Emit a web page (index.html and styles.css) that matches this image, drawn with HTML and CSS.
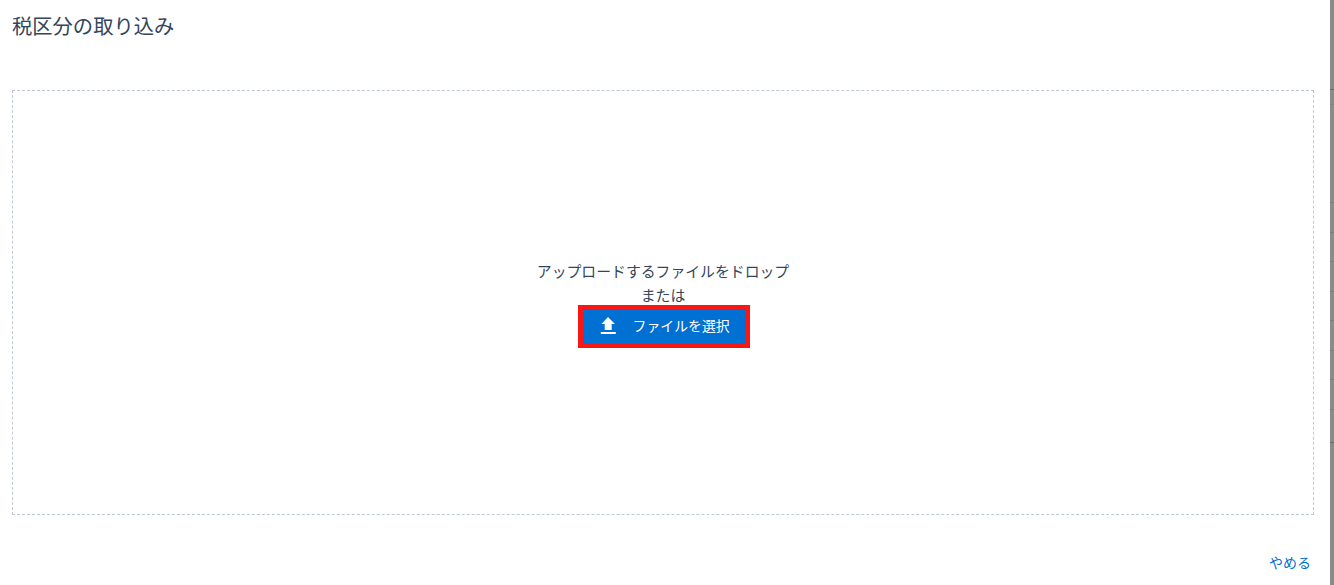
FILE: index.html
```html
<!DOCTYPE html>
<html lang="ja">
<head>
    <meta charset="UTF-8">
    <title>税区分の取り込み</title>
    <link rel="stylesheet" href="styles.css">
</head>
<body>

<div class="page">
    <div class="modal">
        <h1 class="title">税区分の取り込み</h1>

        <div class="dropzone">
            <p class="drop-text">アップロードするファイルをドロップ</p>
            <p class="drop-or">または</p>
            <button class="upload-button" type="button">
                <svg class="upload-icon" width="16" height="17" viewBox="0 0 16 17">
                    <path d="M8 0 L15 7 H11.7 V13 H4.7 V7 H1.5 Z" fill="#ffffff"></path>
                    <rect x="0.8" y="15" width="15" height="2" fill="#ffffff"></rect>
                </svg>
                <span class="upload-label">ファイルを選択</span>
            </button>
        </div>

        <div class="footer">
            <a class="cancel-link" href="#">やめる</a>
        </div>
    </div>

    <!-- page behind the modal, dimmed -->
    <div class="backdrop">
        <div class="backdrop-row row-head"></div>
        <div class="backdrop-row row-sub"></div>
        <div class="backdrop-row row-tall"></div>
        <div class="backdrop-row"></div>
        <div class="backdrop-row"></div>
        <div class="backdrop-row"></div>
        <div class="backdrop-row"></div>
        <div class="backdrop-row"></div>
        <div class="backdrop-row"></div>
        <div class="backdrop-row"></div>
        <div class="backdrop-row row-last"></div>
    </div>
</div>

</body>
</html>
```

FILE: styles.css
```css
html, body {
    height: 100%;
}

body {
    margin: 0;
    background-color: #ffffff;
    color: #33465c;
    font-family: "Noto Sans CJK JP", "Liberation Sans", sans-serif;
    overflow: hidden;
}

.page {
    display: flex;
    height: 585px;
}

.modal {
    flex: 1;
    display: flex;
    flex-direction: column;
    padding: 0 16px 0 12px;
    background-color: #ffffff;
}

.title {
    height: 90px;
    margin: 0;
    padding-top: 11px;
    box-sizing: border-box;
    font-size: 20.3px;
    font-weight: 400;
    line-height: 28px;
}

.dropzone {
    display: flex;
    flex-direction: column;
    align-items: center;
    justify-content: center;
    height: 425px;
    box-sizing: border-box;
    border: 1px dashed #c0c8d8;
}

.drop-text,
.drop-or {
    margin: 0;
    font-size: 14.85px;
    line-height: 24px;
}

.drop-text {
    margin-top: 2px;
}

.drop-or {
    margin-bottom: -2px;
}

.upload-button {
    display: flex;
    align-items: center;
    gap: 17px;
    width: 172px;
    height: 43px;
    margin-left: 1px;
    padding: 0 0 2px 17px;
    box-sizing: border-box;
    border: 5px solid #fb1616;
    background-color: #0070d2;
    color: #ffffff;
    font-family: inherit;
    font-size: 13.9px;
    cursor: pointer;
}

.upload-icon {
    flex-shrink: 0;
}

.upload-label {
    padding-bottom: 2px;
}

.footer {
    display: flex;
    justify-content: flex-end;
    padding: 37px 3px 0 0;
}

.cancel-link {
    color: #0070d2;
    font-size: 14px;
    line-height: 20px;
    text-decoration: none;
}

.backdrop {
    width: 4px;
    background-color: #8b8b8b;
}

.backdrop-row {
    height: 29.5px;
    box-sizing: border-box;
    border-bottom: 1px solid #7d7d7d;
}

.row-head {
    height: 90px;
    border-bottom: 1px solid #6c6c6c;
}

.row-sub {
    height: 15px;
    border-bottom-color: #828282;
}

.row-tall {
    height: 98px;
}

.row-last {
    height: 33px;
    border-bottom-color: #6c6c6c;
}
```
